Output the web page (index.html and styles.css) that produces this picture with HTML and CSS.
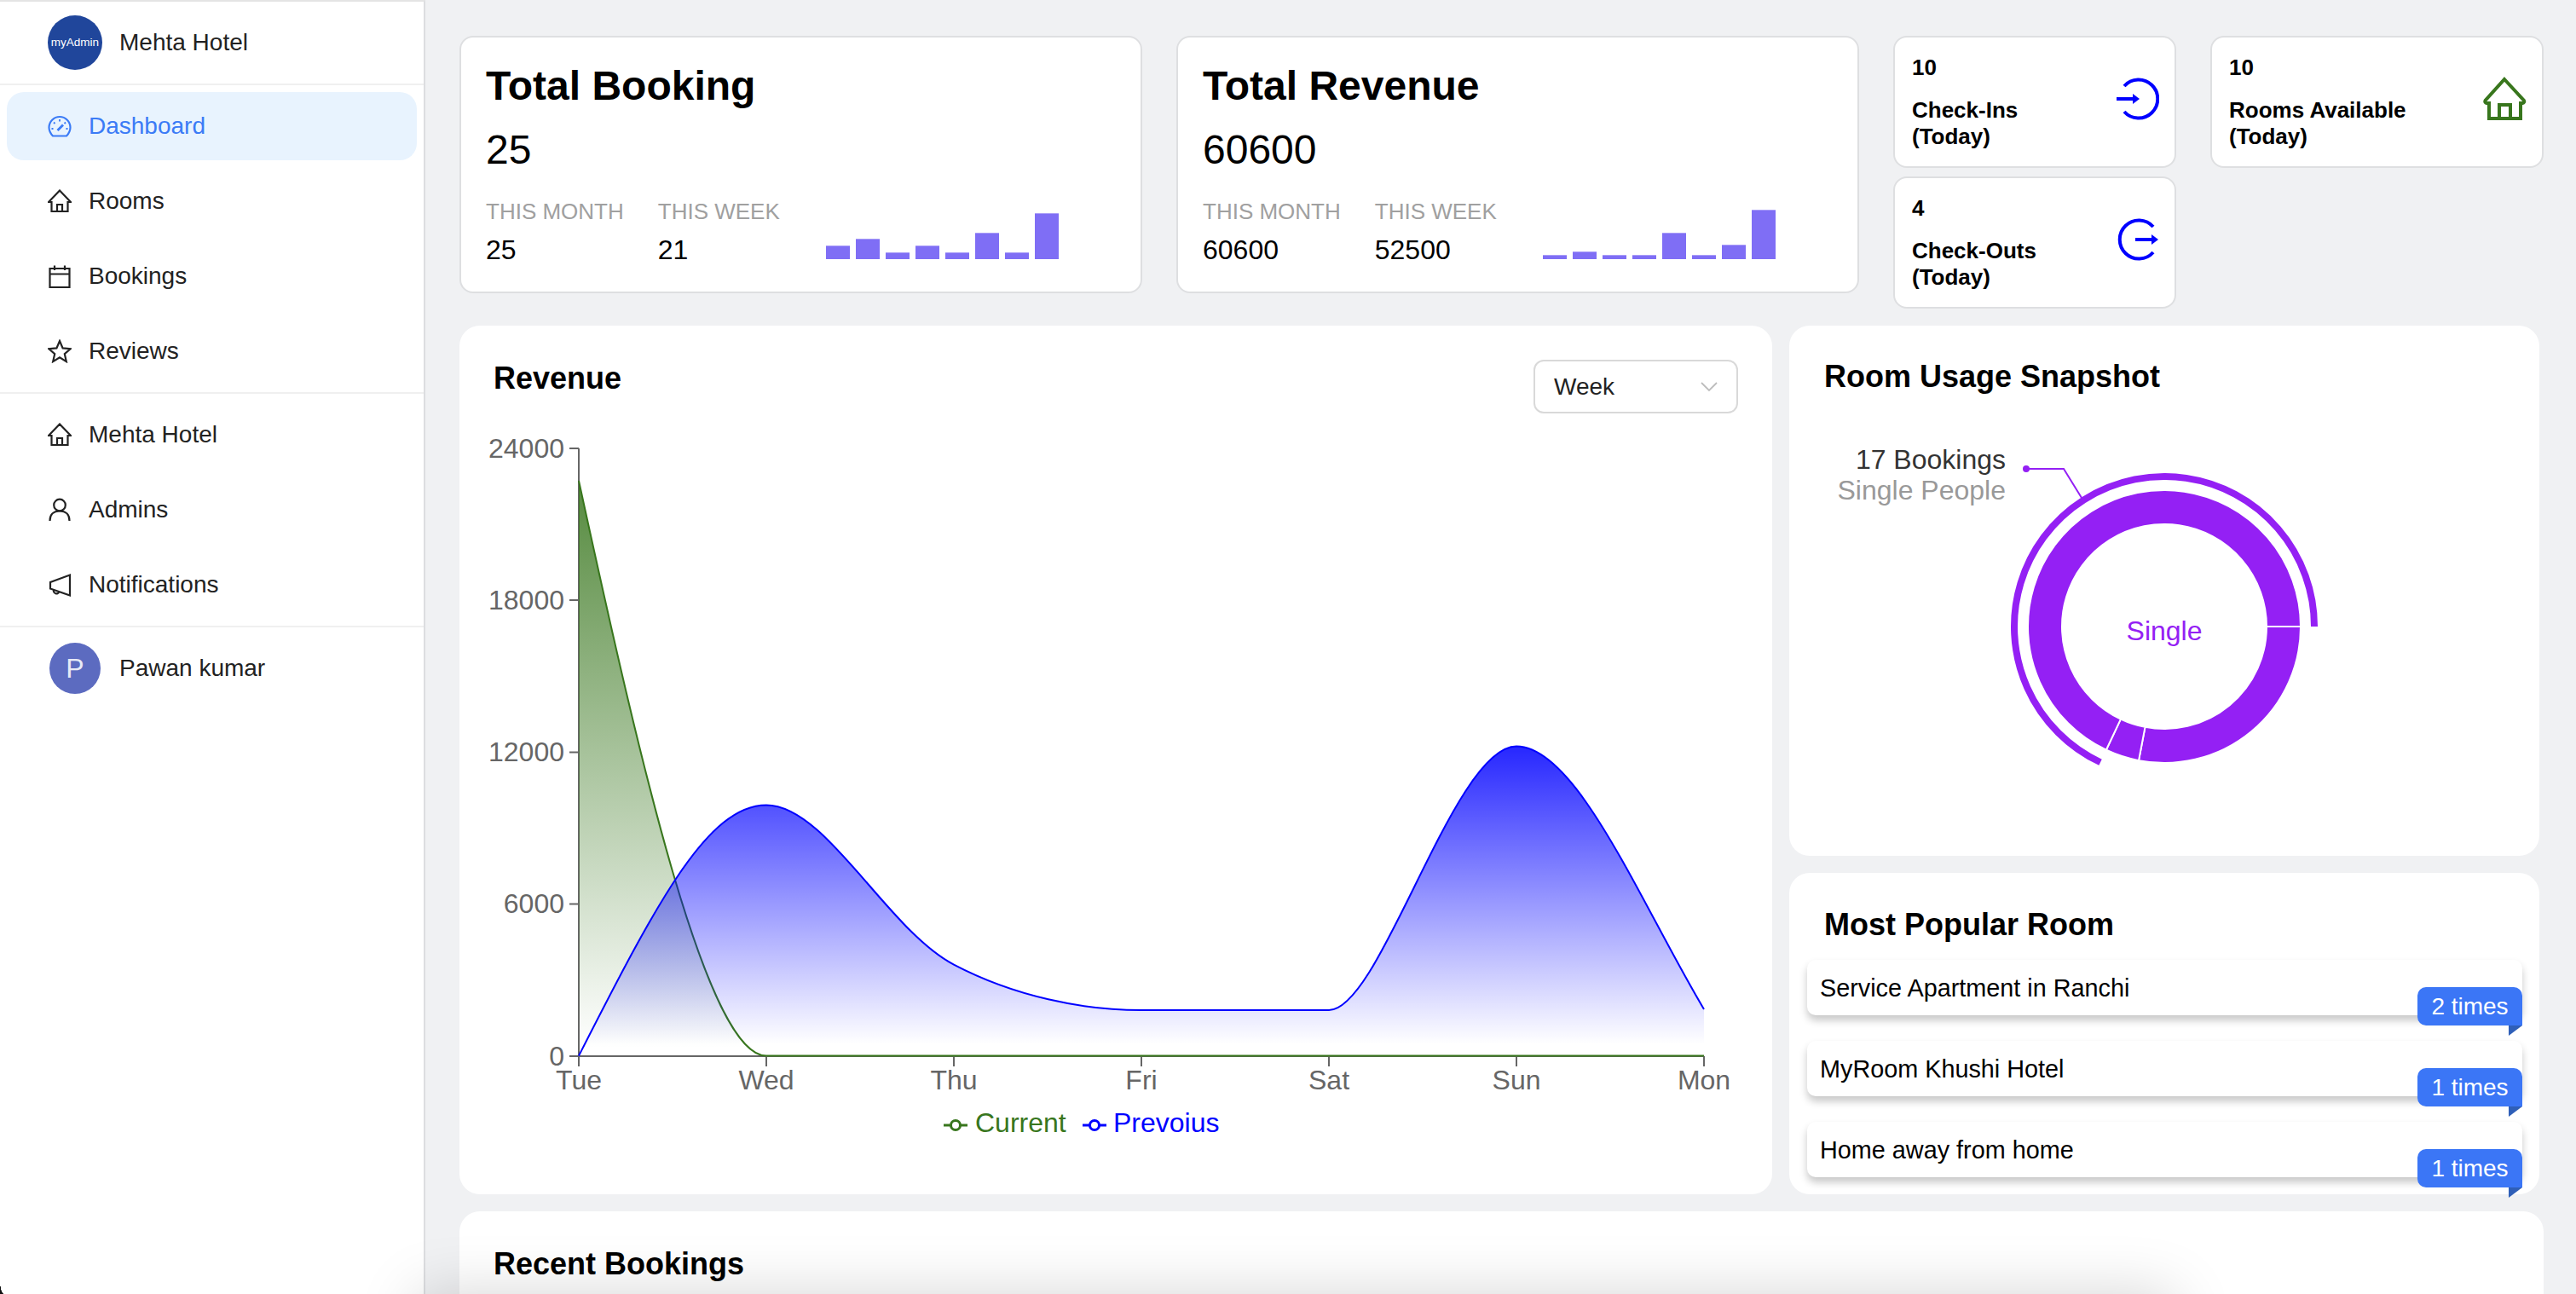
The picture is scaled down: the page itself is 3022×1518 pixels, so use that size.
FILE: index.html
```html
<!DOCTYPE html>
<html lang="en">
<head>
    <meta charset="UTF-8">
    <meta name="viewport" content="width=device-width, initial-scale=1.0">
    <title>Mehta Hotel Dashboard</title>
    <link rel="stylesheet" href="styles.css">
</head>
<body>
    <aside class="sidebar">
        <div class="brand">
            <div class="brand-logo">myAdmin</div>
            <span>Mehta Hotel</span>
        </div>
        <nav class="nav-group">
            <a class="nav-item active">
                <svg class="nav-icon" viewBox="0 0 28 28"><path d="M6 25.500h16c2.500-2.600 4.500-5.500 4.500-10a12.500 12.500 0 0 0-25 0c0 4.500 2 7.400 4.500 10z"/><path d="M14 6v2.500M7 9.500l1.500 1.500M21 9.500L19.500 11M4.500 17h2M21.500 17h2" stroke-width="1.800"/><path d="M11.500 19l6.500-6.500" stroke-width="2.800"/></svg>
                Dashboard
            </a>
            <a class="nav-item">
                <svg class="nav-icon" viewBox="0 0 28 28"><path d="M14 1.500L27 15h-3.500v11h-19V15H1z"/><path d="M11 26v-8h6v8"/></svg>
                Rooms
            </a>
            <a class="nav-item">
                <svg class="nav-icon" viewBox="0 0 28 28"><path d="M2.500 5h23v22h-23zM2.500 11.500h23M8 1.500V7M20 1.500V7"/></svg>
                Bookings
            </a>
            <a class="nav-item">
                <svg class="nav-icon" viewBox="0 0 28 28"><path d="M14 2l3.600 8.400 9 .8-6.800 6 2 8.900L14 21.400l-7.800 4.700 2-8.900-6.800-6 9-.8z"/></svg>
                Reviews
            </a>
        </nav>
        <nav class="nav-group">
            <a class="nav-item">
                <svg class="nav-icon" viewBox="0 0 28 28"><path d="M14 1.500L27 15h-3.500v11h-19V15H1z"/><path d="M11 26v-8h6v8"/></svg>
                Mehta Hotel
            </a>
            <a class="nav-item">
                <svg class="nav-icon" viewBox="0 0 28 28"><circle cx="14" cy="8.500" r="6.800"/><path d="M2.500 27c0-7 4-11.500 11.500-11.500S25.500 20 25.500 27"/></svg>
                Admins
            </a>
            <a class="nav-item">
                <svg class="nav-icon" viewBox="0 0 28 28"><path d="M26 2.500v24L3 18.500v-7.500zM7 20a3.300 3.300 0 0 0 6.500 2"/></svg>
                Notifications
            </a>
        </nav>
        <div class="user-row">
            <div class="user-avatar">P</div>
            <span>Pawan kumar</span>
        </div>
    </aside>

    <main class="content">
        <section class="top-row">
            <div class="stat-card">
                <h1>Total Booking</h1>
                <div class="stat-total">25</div>
                <div class="stat-foot">
                    <div class="stat-col"><div class="stat-label">THIS MONTH</div><div class="stat-value">25</div></div>
                    <div class="stat-col"><div class="stat-label">THIS WEEK</div><div class="stat-value">21</div></div>
                    <div class="mini-bars">
                        <i style="height:16px"></i><i style="height:24px"></i><i style="height:8px"></i><i style="height:16px"></i><i style="height:8px"></i><i style="height:31px"></i><i style="height:8px"></i><i style="height:54px"></i>
                    </div>
                </div>
            </div>
            <div class="stat-card">
                <h1>Total Revenue</h1>
                <div class="stat-total">60600</div>
                <div class="stat-foot">
                    <div class="stat-col"><div class="stat-label">THIS MONTH</div><div class="stat-value">60600</div></div>
                    <div class="stat-col"><div class="stat-label">THIS WEEK</div><div class="stat-value">52500</div></div>
                    <div class="mini-bars">
                        <i style="height:5px"></i><i style="height:9px"></i><i style="height:5px"></i><i style="height:5px"></i><i style="height:31px"></i><i style="height:5px"></i><i style="height:17px"></i><i style="height:58px"></i>
                    </div>
                </div>
            </div>
            <div class="today-card">
                <div class="today-text">
                    <div class="today-num">10</div>
                    <div class="today-label">Check-Ins<br>(Today)</div>
                </div>
                <svg class="today-icon blue" viewBox="0 0 52 52"><path d="M11 11A22.500 22.500 0 1 1 11 41"/><path d="M2 26h20" stroke-width="4"/><path d="M21 20l8 6-8 6z" class="solid"/></svg>
            </div>
            <div class="today-card">
                <div class="today-text">
                    <div class="today-num">10</div>
                    <div class="today-label">Rooms Available<br>(Today)</div>
                </div>
                <svg class="today-icon green" viewBox="0 0 52 52"><path d="M26 3L49 28a2 2 0 0 1-1.500 3H45v18H8V31H5a2 2 0 0 1-1.500-3z"/><path d="M20 49V33h13v16"/></svg>
            </div>
            <div class="today-card">
                <div class="today-text">
                    <div class="today-num">4</div>
                    <div class="today-label">Check-Outs<br>(Today)</div>
                </div>
                <svg class="today-icon blue" viewBox="0 0 52 52"><path d="M45 11A22.500 22.500 0 1 0 45 41"/><path d="M24 26h20" stroke-width="4"/><path d="M43 20l8 6-8 6z" class="solid"/></svg>
            </div>
        </section>

        <section class="mid-row">
            <div class="panel revenue-panel">
                <div class="panel-head">
                    <h2>Revenue</h2>
                    <div class="range-select">
                        <span>Week</span>
                        <svg viewBox="0 0 20 12"><path d="M1 1l9 9 9-9"/></svg>
                    </div>
                </div>
                <svg class="revenue-chart" viewBox="539 500 1540 901">
                    <defs>
                        <linearGradient id="greenFill" gradientUnits="userSpaceOnUse" x1="0" y1="564" x2="0" y2="1230">
                            <stop offset="0" stop-color="#38761d" stop-opacity="0.85"/>
                            <stop offset="1" stop-color="#38761d" stop-opacity="0"/>
                        </linearGradient>
                        <linearGradient id="blueFill" gradientUnits="userSpaceOnUse" x1="0" y1="875" x2="0" y2="1225">
                            <stop offset="0" stop-color="#0000ff" stop-opacity="0.85"/>
                            <stop offset="1" stop-color="#0000ff" stop-opacity="0"/>
                        </linearGradient>
                    </defs>
                    <g class="axis">
                        <path d="M679 526v713M679 1239h1320"/>
                        <path d="M668 526h11M668 704h11M668 882.500h11M668 1060.500h11M668 1239h11"/>
                        <path d="M679 1239v12M899 1239v12M1119 1239v12M1339 1239v12M1559 1239v12M1779 1239v12M1999 1239v12"/>
                    </g>
                    <g class="axis-text y-labels">
                        <text x="662" y="537">24000</text>
                        <text x="662" y="715">18000</text>
                        <text x="662" y="893">12000</text>
                        <text x="662" y="1071">6000</text>
                        <text x="662" y="1250">0</text>
                    </g>
                    <g class="axis-text x-labels">
                        <text x="679" y="1278">Tue</text>
                        <text x="899" y="1278">Wed</text>
                        <text x="1119" y="1278">Thu</text>
                        <text x="1339" y="1278">Fri</text>
                        <text x="1559" y="1278">Sat</text>
                        <text x="1779" y="1278">Sun</text>
                        <text x="1999" y="1278">Mon</text>
                    </g>
                    <path fill="url(#greenFill)" d="M679 564C752 900 830 1238.600 899 1238.600H679Z"/>
                    <path class="line-green" d="M679 564C752 900 830 1238.600 899 1238.600H1999"/>
                    <path fill="url(#blueFill)" d="M679 1238.600C770 1060 830 944.400 899 944.400C969 944.400 1040 1090 1119 1131.700C1190 1169 1270 1185 1339 1185H1559C1620 1185 1705 875.600 1779 875.600C1850 875.600 1925 1060 1999 1184V1238.600Z"/>
                    <path class="line-blue" d="M679 1238.600C770 1060 830 944.400 899 944.400C969 944.400 1040 1090 1119 1131.700C1190 1169 1270 1185 1339 1185H1559C1620 1185 1705 875.600 1779 875.600C1850 875.600 1925 1060 1999 1184"/>
                    <g class="legend-green">
                        <path d="M1107 1320h28"/>
                        <circle cx="1121" cy="1320" r="5.500"/>
                        <text x="1144" y="1328">Current</text>
                    </g>
                    <g class="legend-blue">
                        <path d="M1270 1320h28"/>
                        <circle cx="1284" cy="1320" r="5.500"/>
                        <text x="1306" y="1328">Prevoius</text>
                    </g>
                </svg>
            </div>

            <div class="side-col">
                <div class="panel snapshot-panel">
                    <h2>Room Usage Snapshot</h2>
                    <svg class="snapshot-chart" viewBox="-440 -253 880 524">
                        <g class="donut">
                            <path d="M160 0A160 160 0 0 1 -29.980 157.170L-22.490 117.870A120 120 0 0 0 120 0Z"/>
                            <path d="M-29.980 157.170A160 160 0 0 1 -68.130 144.770L-51.090 108.580A120 120 0 0 0 -22.490 117.870Z"/>
                            <path d="M-68.130 144.770A160 160 0 1 1 160 0L120 0A120 120 0 1 0 -51.090 108.580Z"/>
                        </g>
                        <path class="donut-ring" d="M176 0A176 176 0 1 0 -74.940 159.250"/>
                        <path class="leader" d="M-162 -185H-118L-97 -151"/>
                        <circle class="leader-dot" cx="-162" cy="-185" r="4"/>
                        <text class="snap-count" x="-186" y="-185">17 Bookings</text>
                        <text class="snap-sub" x="-186" y="-149">Single People</text>
                        <text class="snap-center" x="0" y="16">Single</text>
                    </svg>
                </div>
                <div class="panel popular-panel">
                    <h2>Most Popular Room</h2>
                    <ul class="popular-list">
                        <li>Service Apartment in Ranchi<span class="times-badge">2 times</span></li>
                        <li>MyRoom Khushi Hotel<span class="times-badge">1 times</span></li>
                        <li>Home away from home<span class="times-badge">1 times</span></li>
                    </ul>
                </div>
            </div>
        </section>

        <section class="panel bookings-panel">
            <h2>Recent Bookings</h2>
        </section>
    </main>

    <div class="fold-shadow"></div>
    <div class="window-corner"></div>
</body>
</html>
```

FILE: styles.css
```css
* {
    box-sizing: border-box;
}
html, body {
    height: 100%;
}
body {
    margin: 0;
    position: relative;
    display: flex;
    overflow: hidden;
    background-color: #f0f1f3;
    font-family: "Liberation Sans", Arial, sans-serif;
    color: #000;
}
h1, h2 {
    margin: 0;
}

/* sidebar */
.sidebar {
    flex: 0 0 499px;
    background-color: #fff;
    border-top: 2px solid #e4e4e4;
    border-right: 2px solid #dcdde0;
    font-size: 28px;
    color: #222;
}
.brand {
    display: flex;
    align-items: center;
    gap: 20px;
    height: 98px;
    padding-left: 56px;
    border-bottom: 2px solid #f0f0f0;
}
.brand-logo {
    width: 64px;
    height: 64px;
    border-radius: 50%;
    background-color: #20469b;
    color: #fff;
    font-size: 13.5px;
    line-height: 64px;
    text-align: center;
}
.nav-group {
    padding: 8px 0;
    display: flex;
    flex-direction: column;
    gap: 8px;
    border-bottom: 2px solid #f0f0f0;
}
.nav-item {
    display: flex;
    align-items: center;
    gap: 20px;
    height: 80px;
    margin: 0 8px;
    padding-left: 48px;
    border-radius: 20px;
}
.nav-item.active {
    background-color: #e8f3fe;
    color: #3b7bf6;
}
.nav-icon {
    width: 28px;
    height: 28px;
    fill: none;
    stroke: currentColor;
    stroke-width: 2.200;
}
.user-row {
    display: flex;
    align-items: center;
    gap: 22px;
    padding: 18px 0 0 58px;
}
.user-avatar {
    width: 60px;
    height: 60px;
    border-radius: 50%;
    background-color: #5c6bc0;
    color: #e8eaf6;
    font-size: 32px;
    line-height: 60px;
    text-align: center;
}

/* main column */
.content {
    flex: 1;
    min-width: 0;
    padding: 42px 38px 0 40px;
}
.top-row {
    display: grid;
    grid-template-columns: 801px 801px 332px 391px;
    grid-template-rows: 155px 155px;
    column-gap: 40px;
    row-gap: 10px;
}
.stat-card {
    grid-row: span 2;
    height: 302px;
    padding: 29px 30px 0 29px;
    background-color: #fff;
    border: 2px solid #dedfe1;
    border-radius: 16px;
}
.stat-card h1 {
    font-size: 48px;
    line-height: 56px;
}
.stat-total {
    margin-top: 19px;
    font-size: 48px;
    line-height: 56px;
}
.stat-foot {
    display: flex;
    align-items: flex-end;
    gap: 40px;
    margin-top: 28px;
}
.stat-label {
    font-size: 26px;
    line-height: 32px;
    color: #a0a0a0;
}
.stat-value {
    margin-top: 11px;
    font-size: 32px;
    line-height: 37px;
}
.mini-bars {
    display: flex;
    align-items: flex-end;
    gap: 7px;
    margin: 0 0 8px 14px;
}
.mini-bars i {
    display: block;
    width: 28px;
    background-color: #7f6ef5;
    border-top: 1px solid #a99df8;
}
.today-card {
    display: flex;
    justify-content: space-between;
    padding: 20px 18px 0 20px;
    background-color: #fff;
    border: 2px solid #dedfe1;
    border-radius: 16px;
}
.today-num {
    font-size: 26px;
    line-height: 31px;
    font-weight: bold;
}
.today-label {
    margin-top: 19px;
    font-size: 26px;
    line-height: 31px;
    font-weight: bold;
}
.today-icon {
    width: 52px;
    height: 52px;
    margin-top: 26px;
    fill: none;
    stroke-width: 4;
}
.today-icon.blue {
    stroke: #0000ff;
}
.today-icon.green {
    stroke: #38761d;
}
.today-icon .solid {
    fill: #0000ff;
    stroke: none;
}

.mid-row {
    display: flex;
    gap: 20px;
    margin-top: 20px;
}
.panel {
    background-color: #fff;
    border-radius: 24px;
}
.panel h2 {
    font-size: 36px;
    line-height: 42px;
}
.revenue-panel {
    flex: 0 0 1540px;
    height: 1019px;
}
.panel-head {
    display: flex;
    justify-content: space-between;
    align-items: flex-start;
    height: 118px;
    padding: 41px 40px 0 40px;
}
.range-select {
    display: flex;
    justify-content: space-between;
    align-items: center;
    width: 240px;
    height: 63px;
    margin-top: -1px;
    padding: 0 22px 0 22px;
    border: 2px solid #d9d9d9;
    border-radius: 12px;
    font-size: 28px;
    color: #222;
}
.range-select svg {
    width: 20px;
    height: 12px;
    fill: none;
    stroke: #bdbdbd;
    stroke-width: 1.800;
}
.revenue-chart {
    display: block;
    width: 1540px;
    height: 901px;
}
.axis path {
    fill: none;
    stroke: #666;
    stroke-width: 2;
}
.axis-text text {
    font-size: 32px;
    fill: #666;
}
.y-labels text {
    text-anchor: end;
}
.x-labels text {
    text-anchor: middle;
}
.line-green {
    fill: none;
    stroke: #38761d;
    stroke-width: 2;
}
.line-blue {
    fill: none;
    stroke: #0000ff;
    stroke-width: 2;
}
.legend-green, .legend-blue {
    font-size: 32px;
}
.legend-green text {
    fill: #38761d;
}
.legend-blue text {
    fill: #0000ff;
}
.legend-green path, .legend-green circle {
    fill: #fff;
    stroke: #38761d;
    stroke-width: 3;
}
.legend-blue path, .legend-blue circle {
    fill: #fff;
    stroke: #0000ff;
    stroke-width: 3;
}

.side-col {
    flex: 0 0 880px;
    display: flex;
    flex-direction: column;
    gap: 20px;
}
.snapshot-panel {
    height: 622px;
    padding-top: 39px;
}
.snapshot-panel h2 {
    padding-left: 41px;
}
.snapshot-chart {
    display: block;
    width: 880px;
    height: 524px;
    margin-top: 19px;
}
.donut path {
    fill: #9420f4;
    stroke: #fff;
    stroke-width: 2;
}
.donut-ring {
    fill: none;
    stroke: #9420f4;
    stroke-width: 8;
}
.leader {
    fill: none;
    stroke: #9420f4;
    stroke-width: 2;
}
.leader-dot {
    fill: #9420f4;
}
.snapshot-chart text {
    font-size: 32px;
    text-anchor: end;
}
.snap-count {
    fill: #333;
}
.snap-sub {
    fill: #999;
}
.snapshot-chart .snap-center {
    fill: #9420f4;
    text-anchor: middle;
}
.popular-panel {
    height: 377px;
    padding: 40px 20px 0 21px;
}
.popular-panel h2 {
    padding-left: 20px;
}
.popular-list {
    display: flex;
    flex-direction: column;
    gap: 30px;
    margin: 20px 0 0;
    padding: 0;
    list-style: none;
}
.popular-list li {
    position: relative;
    height: 65px;
    padding: 17px 0 0 15px;
    background-color: #fff;
    border-radius: 10px;
    box-shadow: 0 6px 10px rgba(0, 0, 0, 0.22);
    font-size: 28.8px;
    line-height: 32px;
}
.times-badge {
    position: absolute;
    top: 32px;
    right: 0;
    width: 123px;
    height: 45px;
    background-color: #3b76f6;
    border-radius: 10px 10px 0 10px;
    color: #fff;
    font-size: 28px;
    line-height: 45px;
    text-align: center;
}
.times-badge::after {
    content: "";
    position: absolute;
    top: 45px;
    right: 0;
    border-top: 12px solid #2f5fb8;
    border-right: 16px solid transparent;
}
.bookings-panel {
    margin-top: 20px;
    height: 300px;
    padding: 41px 0 0 40px;
}

.fold-shadow {
    position: absolute;
    left: 490px;
    top: 100%;
    width: 2060px;
    height: 200px;
    box-shadow: 0 0 70px rgba(0, 0, 0, 0.17);
    pointer-events: none;
}
.window-corner {
    position: absolute;
    left: 0;
    bottom: 0;
    width: 5px;
    height: 16px;
    background: radial-gradient(ellipse at 100% 0, transparent 70%, #111 72%);
}
```
